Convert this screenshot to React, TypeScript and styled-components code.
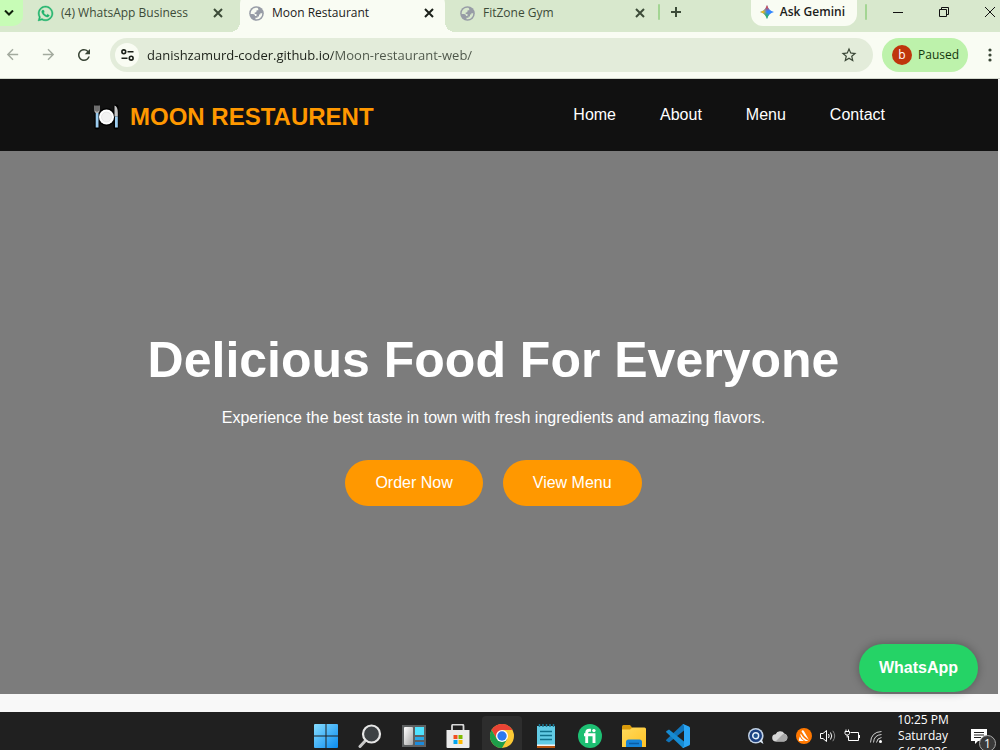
import React from "react";
import styled, { createGlobalStyle, css } from "styled-components";
import { FaWhatsapp } from "react-icons/fa";
import { MdStarOutline, MdRefresh, MdArrowBack, MdArrowForward } from "react-icons/md";

const GlobalStyle = createGlobalStyle`
  * { box-sizing: border-box; }
  html, body, #root { height: 100%; }
  body { margin: 0; overflow: hidden; background: #f8f8f8; }
  button, input { font: inherit; color: inherit; border: 0; background: none; padding: 0; margin: 0; }
  button { cursor: pointer; }
  svg { display: block; flex: none; }
`;

const uiFont = `"Segoe UI", "Open Sans", "Noto Sans", sans-serif`;
const webFont = `Arial, "Liberation Sans", sans-serif`;

const Screen = styled.div`
  display: flex;
  flex-direction: column;
  height: 100vh;
  overflow: hidden;
`;

/* ---------- Browser ---------- */

const TabStrip = styled.div`
  display: flex;
  flex: none;
  height: 32px;
  overflow: hidden;
  background: #d8e8cd;
  color: #3c4b38;
  font: 12px/16px ${uiFont};
`;

const TabSearch = styled.button`
  display: flex;
  align-items: center;
  justify-content: center;
  width: 23px;
  height: 26px;
  padding-right: 5px;
  border-radius: 0 0 10px 0;
  background: #c7fcb6;
  color: #10200c;
`;

const Tabs = styled.div`
  display: flex;
  gap: 6px;
  margin-left: 6px;
`;

const Tab = styled.div<{ $active?: boolean }>`
  position: relative;
  display: flex;
  align-items: center;
  width: 205px;
  height: 40px;
  margin-top: -8px;
  padding: 2px 8px 0;
  ${(p) =>
    p.$active &&
    css`
      border-radius: 12px 12px 0 0;
      background: #f9fcf3;
      color: #1c211a;
      &::before,
      &::after {
        content: "";
        position: absolute;
        bottom: 0;
        width: 10px;
        height: 10px;
      }
      &::before {
        right: 100%;
        background: radial-gradient(circle at 0 0, transparent 10px, #f9fcf3 10px);
      }
      &::after {
        left: 100%;
        background: radial-gradient(circle at 100% 0, transparent 10px, #f9fcf3 10px);
      }
    `}
`;

const TabTitle = styled.button`
  display: flex;
  flex: 1;
  align-items: center;
  gap: 7px;
  text-align: left;
  white-space: nowrap;
`;

const IconButton = styled.button<{ $w?: number }>`
  display: flex;
  flex: none;
  align-items: center;
  justify-content: center;
  width: ${(p) => p.$w ?? 16}px;
  height: 24px;
`;

const Divider = styled.span`
  width: 2px;
  height: 16px;
  margin: 4px 8px 0 2px;
  border-radius: 1px;
  background: #a3d593;
`;

const GeminiButton = styled.button`
  display: flex;
  align-items: center;
  gap: 6px;
  height: 26px;
  margin-left: auto;
  margin-right: 6px;
  padding: 0 12px 2px 9px;
  border-radius: 0 0 12px 12px;
  background: #f9fcf3;
  color: #1c211a;
  font-weight: 600;
  white-space: nowrap;
`;

const WindowControls = styled.div`
  display: flex;
  margin-right: -13px;
  color: #111;
`;

const Toolbar = styled.div`
  display: flex;
  flex: none;
  align-items: center;
  height: 47px;
  padding-bottom: 1px;
  border-bottom: 1px solid #d3d8cd;
  background: #f9fcf3;
  color: #3a4636;
`;

const NavButtons = styled.div`
  display: flex;
  gap: 12px;
  margin-right: 14px;
`;

const AddressBar = styled.div`
  display: flex;
  flex: 1;
  align-items: center;
  height: 34px;
  margin-right: 9px;
  padding: 0 14px 0 5px;
  border-radius: 17px;
  background: #e3ecda;
`;

const SiteInfo = styled(IconButton)`
  height: 24px;
  border-radius: 12px;
  background: #f9fcf3;
  color: #1c211a;
`;

/* The host part of the address is darker than the path. */
const Address = styled.input`
  flex: 1;
  min-width: 0;
  margin: 0 8px;
  outline: 0;
  background: linear-gradient(90deg, #1b2018 186px, #4c5548 186px);
  background-clip: text;
  -webkit-text-fill-color: transparent;
  font: 13px/20px ${uiFont};
`;

const Profile = styled.button`
  display: flex;
  align-items: center;
  gap: 6px;
  width: 86px;
  height: 34px;
  margin-right: 12px;
  padding: 0 0 0 10px;
  border-radius: 17px;
  background: #bdf2ab;
  color: #14370c;
  font: 12px/16px ${uiFont};
`;

const Avatar = styled.span`
  width: 20px;
  height: 20px;
  border-radius: 50%;
  background: #bf360c;
  color: #fff;
  line-height: 20px;
  text-align: center;
`;

/* ---------- Restaurant page ---------- */

const Page = styled.div`
  position: relative;
  display: flex;
  flex: 1;
  flex-direction: column;
  min-height: 0;
  padding: 0 2px 18px 0;
  background: #f8f8f8;
  font: 16px/18px ${webFont};
  color: #fff;
`;

const SiteHeader = styled.header`
  display: flex;
  flex: none;
  align-items: center;
  justify-content: space-between;
  height: 72px;
  padding: 0 113px 0 93px;
  background: #111;
`;

const Logo = styled.div`
  display: flex;
  align-items: center;
  gap: 10px;
  padding-top: 4px;
  color: #ff9800;
  font-size: 24px;
  font-weight: bold;
  line-height: 28px;
`;

const SiteNav = styled.nav`
  display: flex;
  gap: 44px;
`;

const NavLink = styled.a`
  color: #fff;
  text-decoration: none;
`;

const Hero = styled.main`
  display: flex;
  flex: 1;
  flex-direction: column;
  align-items: center;
  justify-content: center;
  padding: 0 11px 8px 0;
  background: #7c7c7c;
  text-align: center;
`;

const HeroTitle = styled.h1`
  margin: 0 0 20px;
  font-size: 50px;
  line-height: 58px;
`;

const HeroText = styled.p`
  margin: 0 0 33px;
`;

const HeroActions = styled.div`
  display: flex;
  gap: 20px;
`;

const HeroLink = styled.a`
  padding: 14px 30px;
  border-radius: 30px;
  background: #ff9800;
  color: #fff;
  text-decoration: none;
`;

const WhatsAppLink = styled.a`
  position: absolute;
  right: 22px;
  bottom: 20px;
  padding: 15px 20px;
  border-radius: 24px;
  background: #25d366;
  box-shadow: 0 0 10px rgba(0, 0, 0, 0.3);
  color: #fff;
  font-weight: bold;
  text-decoration: none;
`;

/* ---------- Taskbar ---------- */

const Taskbar = styled.footer`
  display: grid;
  grid-template-columns: 1fr auto 1fr;
  flex: none;
  height: 38px;
  overflow: hidden;
  background: #202020;
  color: #fff;
  font: 12px/16px ${uiFont};
`;

const Apps = styled.div`
  display: flex;
  grid-column: 2;
  gap: 4px;
  padding: 4px 0 0 4px;
`;

const AppButton = styled.button<{ $active?: boolean }>`
  display: flex;
  align-items: center;
  justify-content: center;
  width: 40px;
  height: 40px;
  border-radius: 4px;
  background: ${(p) => (p.$active ? "#2d2d2d" : "none")};
`;

const Tray = styled.div`
  display: flex;
  justify-content: flex-end;
  height: 48px;
`;

const TrayButton = styled.button`
  display: flex;
  align-items: center;
  justify-content: center;
  width: 24px;
`;

const Clock = styled.time`
  width: 70px;
  text-align: center;
  white-space: nowrap;
`;

const Notifications = styled.button`
  position: relative;
  display: flex;
  align-items: center;
  justify-content: center;
  width: 42px;
`;

const Count = styled.span`
  position: absolute;
  top: 23px;
  right: 4px;
  width: 17px;
  height: 17px;
  border: 1px solid #a8a8a8;
  border-radius: 50%;
  background: #3a3a3a;
  line-height: 15px;
  text-align: center;
`;

/* ---------- Drawings ---------- */

const Cross = ({ size = 8, w = 2 }: { size?: number; w?: number }) => (
  <svg width={size} height={size} viewBox="0 0 8 8" stroke="currentColor" strokeWidth={(w * 8) / size} overflow="visible">
    <path d="M0 0 8 8M8 0 0 8" />
  </svg>
);

const Globe = ({ land }: { land: string }) => (
  <svg width="17" height="15" viewBox="-1 0 17 15">
    <circle cx="7.500" cy="7.500" r="7.300" fill="#979ca6" />
    <path d="M8.300 1.700Q4.200 1.200 2.300 4.700 1.500 6.500 1.700 8L4 8.100Q6 8.200 6.100 10H7.500V8H5.700V6.500Q7.500 6.600 7.600 5V4.300H9.300Q9.500 2.300 8.300 1.700Z" fill={land} />
    <path d="M13.300 7.300Q13.400 10.500 11 12.300 9 13.700 6.500 13.200V11.800H8.500V10.500H10V8.500H11.300V7.300Z" fill={land} />
  </svg>
);

const GeminiMark = () => (
  <svg width="14" height="14" viewBox="0 0 14 14">
    <defs>
      <radialGradient id="gr" cx="50%" cy="0%" r="45%"><stop offset=".3" stopColor="#ea4335" /><stop offset="1" stopColor="#ea4335" stopOpacity="0" /></radialGradient>
      <radialGradient id="gy" cx="0%" cy="50%" r="50%"><stop offset=".4" stopColor="#fbbc04" /><stop offset="1" stopColor="#fbbc04" stopOpacity="0" /></radialGradient>
      <radialGradient id="gg" cx="40%" cy="100%" r="50%"><stop offset=".4" stopColor="#2fb457" /><stop offset="1" stopColor="#2fb457" stopOpacity="0" /></radialGradient>
    </defs>
    {["#3186ff", "url(#gr)", "url(#gy)", "url(#gg)"].map((fill) => (
      <path key={fill} fill={fill} d="M7 0C8 3.800 10.200 6 14 7 10.200 8 8 10.200 7 14 6 10.200 3.800 8 0 7 3.800 6 6 3.800 7 0Z" />
    ))}
  </svg>
);

const Plate = () => (
  <svg width="27" height="26" viewBox="0 0 27 26">
    <g stroke="#000" strokeWidth="5" strokeLinecap="round">
      <path d="M4 3v20M23 3v20" />
    </g>
    <circle cx="13.500" cy="13" r="9" fill="#000" />
    <path d="M2 1.500v5q0 2 2 2t2-2v-5M4 1.500v8" stroke="#b9b9b9" strokeWidth="1.200" fill="none" />
    <path d="M2.700 9h2.800v14.500H2.700z" fill="#9ccdf0" />
    <path d="M21.500 1.500q3.300 1 3.300 7v4h-3.300z" fill="#c4c4c4" />
    <path d="M22 12.500h2.800v11H22z" fill="#9ccdf0" />
    <circle cx="13.500" cy="13" r="7.500" fill="#fff" />
    <circle cx="13.500" cy="13" r="5" fill="#f2f2f2" stroke="#dedede" strokeWidth=".6" />
  </svg>
);

const WindowsIcon = () => (
  <svg width="24" height="24" viewBox="0 0 24 24">
    <defs><linearGradient id="win" x2="1" y2="1" gradientUnits="objectBoundingBox"><stop stopColor="#85dcff" /><stop offset="1" stopColor="#0a8cf0" /></linearGradient></defs>
    <path fill="url(#win)" d="M1 0H11.500V11.500H0V1Q0 0 1 0ZM12.500 0H23Q24 0 24 1V11.500H12.500ZM0 12.500H11.500V24H1Q0 24 0 23ZM12.500 12.500H24V23Q24 24 23 24H12.500Z" />
  </svg>
);

const SearchIcon = () => (
  <svg width="24" height="24" viewBox="0 0 24 24" fill="none">
    <path d="M8.500 15.500 2 22.500" stroke="#c8c8c8" strokeWidth="3" strokeLinecap="round" />
    <circle cx="13.500" cy="10" r="8.500" fill="#3d4144" stroke="#e6e6e6" strokeWidth="2.200" />
  </svg>
);

const WidgetsIcon = () => (
  <svg width="24" height="24" viewBox="0 0 24 24">
    <defs><linearGradient id="wid" x2="1" y2="1"><stop stopColor="#fff" /><stop offset="1" stopColor="#a5a5a5" /></linearGradient></defs>
    <path d="M0 1h24v22H0z" fill="#5d6061" />
    <rect x="2" y="3" width="9" height="18" rx="1" fill="url(#wid)" />
    <path d="M13 3h9v8h-9z" fill="#4fe3ff" />
    <path d="M13 13h9v3h-9z" fill="#28a8e6" />
    <path d="M13 18h9v3h-9z" fill="#1b8bdc" />
  </svg>
);

const StoreIcon = () => (
  <svg width="24" height="24" viewBox="0 0 24 24">
    <path d="M6 8V2q0-1.500 1.500-1.500h8.500Q17.500.5 17.500 2V8" fill="none" stroke="#d7d7d7" strokeWidth="1.800" />
    <path d="M.5 6h23v17q0 1-1 1h-21q-1 0-1-1Z" fill="#ececec" />
    <path d="M7.500 11H11.500V15H7.500z" fill="#f25022" /><path d="M12.500 11h4v4h-4z" fill="#7fba00" />
    <path d="M7.500 16h4v4h-4z" fill="#00a4ef" /><path d="M12.500 16h4v4h-4z" fill="#ffb900" />
  </svg>
);

const ChromeIcon = () => (
  <svg width="24" height="24" viewBox="0 0 24 24">
    <circle cx="12" cy="12" r="12" fill="#fcc934" />
    <path d="M12 12 12 6H22.400A12 12 0 0 0 1.600 6L6.800 15Z" fill="#ea4335" />
    <path d="M1.600 6A12 12 0 0 0 12 24L17.200 15 12 12 6.800 15Z" fill="#1e9e4a" />
    <circle cx="12" cy="12" r="6" fill="#fff" />
    <circle cx="12" cy="12" r="4.700" fill="#2c78ee" />
  </svg>
);

const NotepadIcon = () => (
  <svg width="24" height="24" viewBox="0 0 24 24">
    <path d="M3 2h18v19H3z" fill="#62cbe5" />
    <path d="M3 20.500h18V22H3z" fill="#f5f5f5" /><path d="M3 22h18v2H3z" fill="#b6520f" />
    <path d="M5.500 0v3M9 0v3M12.500 0v3M16 0v3M19.500 0v3" stroke="#1a7894" strokeWidth="1.500" />
    <path d="M6 7.500h12M6 11.500h12M6 15.500h12" stroke="#10718c" strokeWidth="1.600" />
  </svg>
);

const FiverrIcon = () => (
  <svg width="24" height="24" viewBox="0 0 24 24">
    <circle cx="12" cy="12" r="12" fill="#1dbf73" />
    <path d="M8.700 19V9q0-2.700 2.700-2.700h1.500M6 10.700h10V19" fill="none" stroke="#fff" strokeWidth="2.900" />
    <circle cx="15.900" cy="6.600" r="1.700" fill="#fff" />
  </svg>
);

const FolderIcon = () => (
  <svg width="24" height="24" viewBox="0 0 24 24">
    <defs><linearGradient id="fold" x2="1" y2="1"><stop stopColor="#ffda5c" /><stop offset="1" stopColor="#ffc226" /></linearGradient></defs>
    <path d="M0 2.500Q0 1 1.500 1H8l2.500 3v4H0z" fill="#d99a0b" />
    <path d="M0 5.500H8L10.500 3.500H22.500Q24 3.500 24 5V23H0z" fill="url(#fold)" />
    <path d="M4 23V18q0-2.500 2.500-2.500h11Q20 15.500 20 18v5z" fill="#1683d8" />
    <path d="M7 19.500h10" stroke="#0a5ba3" strokeWidth="1.500" />
  </svg>
);

const CodeIcon = () => (
  <svg width="24" height="24" viewBox="0 0 24 24">
    <path d="M18 0.500 18 6.500 3 18.500 0.500 17Q-.3 16.200.5 15.400L16.500.6Q17.200 0 18 .5Z" fill="#1074ba" />
    <path d="M18 23.500 18 17.500 3 5.500.5 7Q-.3 7.800.5 8.600L16.500 23.400Q17.200 24 18 23.500Z" fill="#168bd2" />
    <path d="M17.800.2 23 2.500Q24 3 24 4V20Q24 21 23 21.500L17.800 23.800Q16.800 24.100 16.300 23.200 18 23.500 18 21.500V2.500Q18 .5 16.300.8 16.800-.1 17.800.2Z" fill="#2aa5f4" />
  </svg>
);

const tray = [
  {
    name: "Search assistant",
    icon: (
      <svg width="16" height="16" viewBox="0 0 16 16">
        <circle cx="7.800" cy="7.800" r="7.800" fill="#c3d3e6" /><path d="M9 12 13 9 15.500 16Z" fill="#dce8f4" />
        <circle cx="7.700" cy="7.700" r="5" fill="#e8f1fa" stroke="#1c3f7e" strokeWidth="2.600" />
        <circle cx="7.700" cy="7.700" r="2.200" fill="#21508c" />
      </svg>
    ),
  },
  {
    name: "OneDrive",
    icon: (
      <svg width="16" height="12" viewBox="0 0 16 12">
        <path d="M4 11.500a3.600 3.600 0 0 1-.4-7.200A5 5 0 0 1 12.500 3.700 4 4 0 0 1 12 11.500Z" fill="#d6d6d6" />
        <path d="M3.500 11.400 10.500 4.500q1.500-1 2.500-.6A4 4 0 0 1 12 11.500H4Z" fill="#a8a8a8" />
      </svg>
    ),
  },
  {
    name: "Antivirus",
    icon: (
      <svg width="16" height="16" viewBox="0 0 16 16">
        <circle cx="8" cy="8" r="8" fill="#ff7800" />
        <path d="M6 2.500q1.200-.6 1.900.6L13 12Q8 8.500 5.500 3.500ZM4.700 5.500Q7 10 12.500 13H9.500Q6 11.500 4.300 7ZM3.800 8.500Q5 11.500 8 13H3.300Q2.500 12.500 2.800 11.700Z" fill="#fff" />
      </svg>
    ),
  },
  {
    name: "Volume",
    icon: (
      <svg width="16" height="16" viewBox="0 0 16 16" fill="none" stroke="#fff">
        <path d="M.5 5.500H3L6.500 2.500V13.500L3 10.500H.5zM8.500 6q1.300 2 0 4M10.500 4.500q2.500 3.500 0 7" />
        <path d="M12.800 2.800q3.800 5.200 0 10.400" stroke="#888" />
      </svg>
    ),
  },
  {
    name: "Battery",
    icon: (
      <svg width="17" height="16" viewBox="0 0 17 16" fill="none" stroke="#fff">
        <path d="M6.500 4.500H14.500V12.500H4.500V8M15.500 7v3M2 1.500v2M4.500 1.500v2M1 3.500H5.500V5.500Q5.500 7 3.200 7 1 7 1 5.500ZM3.200 7V9.500" />
      </svg>
    ),
  },
  {
    name: "Wi-Fi",
    icon: (
      <svg width="16" height="16" viewBox="0 0 16 16" fill="none" stroke="#d0d0d0">
        <path d="M2.500 14.500Q3 4 13.500 3.500M5.500 14.500Q6 7 13.500 6.500M8.500 14.500Q9 10 13.500 9.500" />
        <circle cx="12.500" cy="13.500" r="1.500" fill="#fff" stroke="none" />
      </svg>
    ),
  },
];

const apps = [
  { name: "Start", Icon: WindowsIcon },
  { name: "Search", Icon: SearchIcon },
  { name: "Widgets", Icon: WidgetsIcon },
  { name: "Microsoft Store", Icon: StoreIcon },
  { name: "Google Chrome", Icon: ChromeIcon, active: true },
  { name: "Notepad", Icon: NotepadIcon },
  { name: "Fiverr", Icon: FiverrIcon },
  { name: "File Explorer", Icon: FolderIcon },
  { name: "Visual Studio Code", Icon: CodeIcon },
];

const tabs = [
  { title: "(4) WhatsApp Business", icon: <FaWhatsapp size={17} color="#1fb36b" stroke="#1fb36b" strokeWidth={14} /> },
  { title: "Moon Restaurant", icon: <Globe land="#f9fcf3" />, active: true },
  { title: "FitZone Gym", icon: <Globe land="#d8e8cd" /> },
];

export default function App() {
  return (
    <Screen>
      <GlobalStyle />
      <TabStrip>
        <TabSearch aria-label="Search tabs">
          <svg width="10" height="6" viewBox="0 0 10 6" fill="none" stroke="currentColor" strokeWidth="2"><path d="M1 .5 5 4.500 9 .5" /></svg>
        </TabSearch>
        <Tabs>
          {tabs.map((t) => (
            <Tab key={t.title} $active={t.active}>
              <TabTitle>{t.icon}{t.title}</TabTitle>
              <IconButton aria-label={`Close ${t.title}`}><Cross /></IconButton>
            </Tab>
          ))}
        </Tabs>
        <Divider />
        <IconButton aria-label="New tab">
          <svg width="10" height="10" viewBox="0 0 10 10" stroke="currentColor" strokeWidth="2"><path d="M5 0v10M0 5h10" /></svg>
        </IconButton>
        <GeminiButton><GeminiMark />Ask Gemini</GeminiButton>
        <Divider />
        <WindowControls>
          <IconButton $w={46} aria-label="Minimize">
            <svg width="10" height="10" stroke="currentColor"><path d="M0 5.500h10" /></svg>
          </IconButton>
          <IconButton $w={46} aria-label="Restore">
            <svg width="10" height="10" fill="none" stroke="currentColor"><path d="M.5 2.500h7v7h-7zM2.500 2.500v-2h7v7h-2" /></svg>
          </IconButton>
          <IconButton $w={46} aria-label="Close window"><Cross size={10} w={1} /></IconButton>
        </WindowControls>
      </TabStrip>

      <Toolbar>
        <NavButtons>
          <IconButton $w={24} aria-label="Back"><MdArrowBack size={17} color="#a3aa9e" /></IconButton>
          <IconButton $w={24} aria-label="Forward"><MdArrowForward size={17} color="#a3aa9e" /></IconButton>
          <IconButton $w={24} aria-label="Reload"><MdRefresh size={18} /></IconButton>
        </NavButtons>
        <AddressBar>
          <SiteInfo $w={24} aria-label="Site information">
            <svg width="13" height="12" viewBox="0 0 13 12" fill="none" stroke="currentColor" strokeWidth="1.600">
              <circle cx="2.800" cy="2.800" r="1.900" /><path d="M6.500 2.800H12.500M.5 9.200h6" /><circle cx="10.200" cy="9.200" r="1.900" />
            </svg>
          </SiteInfo>
          <Address aria-label="Address" defaultValue="danishzamurd-coder.github.io/Moon-restaurant-web/" />
          <IconButton $w={20} aria-label="Bookmark"><MdStarOutline size={18} /></IconButton>
        </AddressBar>
        <Profile><Avatar>b</Avatar>Paused</Profile>
        <IconButton $w={20} aria-label="Browser menu">
          <svg width="4" height="14" viewBox="0 0 4 14" fill="currentColor"><circle cx="2" cy="2" r="1.600" /><circle cx="2" cy="7" r="1.600" /><circle cx="2" cy="12" r="1.600" /></svg>
        </IconButton>
      </Toolbar>

      <Page>
        <SiteHeader>
          <Logo><Plate />MOON RESTAURENT</Logo>
          <SiteNav>
            {["Home", "About", "Menu", "Contact"].map((n) => (
              <NavLink key={n} href={`#${n.toLowerCase()}`}>{n}</NavLink>
            ))}
          </SiteNav>
        </SiteHeader>
        <Hero>
          <HeroTitle>Delicious Food For Everyone</HeroTitle>
          <HeroText>Experience the best taste in town with fresh ingredients and amazing flavors.</HeroText>
          <HeroActions>
            <HeroLink href="#order">Order Now</HeroLink>
            <HeroLink href="#menu">View Menu</HeroLink>
          </HeroActions>
        </Hero>
        <WhatsAppLink href="#whatsapp">WhatsApp</WhatsAppLink>
      </Page>

      <Taskbar>
        <Apps>
          {apps.map(({ name, Icon, active }) => (
            <AppButton key={name} aria-label={name} $active={active}><Icon /></AppButton>
          ))}
        </Apps>
        <Tray>
          {tray.map((t) => (
            <TrayButton key={t.name} aria-label={t.name}>{t.icon}</TrayButton>
          ))}
          <Clock>10:25 PM<br />Saturday<br />6/6/2026</Clock>
          <Notifications aria-label="Notifications">
            <svg width="16" height="15" viewBox="0 0 16 15"><path d="M0 0h16v12H7l-3 3v-3H0z" fill="#fff" /><path d="M3 3.500h10M3 6h10M3 8.500h7" stroke="#202020" /></svg>
            <Count>1</Count>
          </Notifications>
        </Tray>
      </Taskbar>
    </Screen>
  );
}
